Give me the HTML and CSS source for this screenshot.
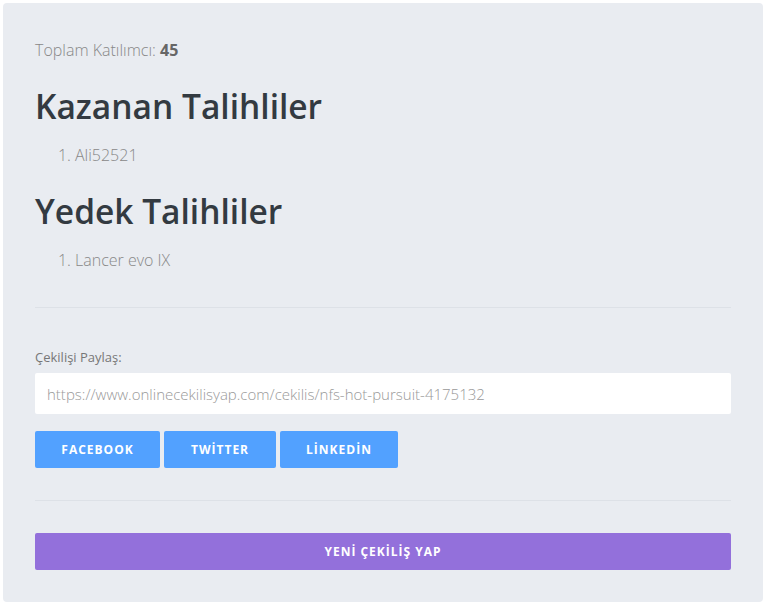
FILE: index.html
```html
<!DOCTYPE html>
<html lang="tr">
  <head>
    <title>Çekiliş Sonucu</title>
    <meta charset="utf-8" />
    <link rel="stylesheet" href="styles.css">
  </head>
  <body>
    <div class="card">
      <p class="total">Toplam Katılımcı: <b>45</b></p>

      <h2>Kazanan Talihliler</h2>
      <ol class="names">
        <li>Ali52521</li>
      </ol>

      <h2>Yedek Talihliler</h2>
      <ol class="names">
        <li>Lancer evo IX</li>
      </ol>

      <hr class="first" />

      <div class="share">
        <label for="shareLink">Çekilişi Paylaş:</label>
        <input
          id="shareLink"
          type="text"
          readonly
          value="https://www.onlinecekilisyap.com/cekilis/nfs-hot-pursuit-4175132"
        />
        <div class="buttons">
          <a class="btn btn-blue btn-fb" href="#">Facebook</a>
          <a class="btn btn-blue btn-tw" href="#">Twİtter</a>
          <a class="btn btn-blue btn-in" href="#">Lİnkedİn</a>
        </div>
      </div>

      <hr />

      <a class="btn btn-purple" href="#">Yenİ Çekİlİş Yap</a>
    </div>
  </body>
</html>
```

FILE: styles.css
```css
body {
  margin: 0;
  padding: 3px 6px 6px 3px;
  background-color: #fff;
  font-family: "Open Sans", sans-serif;
  font-weight: 300;
  color: #888;
}

.card {
  background-color: #e9ecf1;
  border-radius: 4px;
  padding: 35px 32px 32px;
}

.total {
  margin: 0;
  font-size: 16px;
  line-height: 24px;
}

.total b {
  font-weight: 700;
  color: #666;
}

h2 {
  font-family: "Open Sans", sans-serif;
  font-weight: 600;
  font-size: 33.5px;
  line-height: 40px;
  color: #333a41;
  margin: 24px 0 17px;
}

.names {
  margin: 0;
  padding-left: 40px;
  font-size: 16px;
  line-height: 24px;
}

hr {
  border: 0;
  border-top: 1px solid #dde1e7;
  margin: 32px 0;
}

hr.first {
  margin: 35px 0 39px;
}

.share label {
  display: block;
  font-size: 13px;
  font-weight: 400;
  color: #777;
  line-height: 20px;
  margin-bottom: 6px;
}

.share input {
  display: block;
  box-sizing: border-box;
  width: 100%;
  height: 41px;
  border: 0;
  border-radius: 2px;
  padding: 0 12px;
  background: #fff;
  font-family: "Open Sans", sans-serif;
  font-weight: 300;
  font-size: 15px;
  color: #999;
  outline: none;
}

.buttons {
  display: flex;
  gap: 4px;
  margin-top: 17px;
}

.btn {
  display: inline-block;
  box-sizing: border-box;
  height: 37px;
  line-height: 37px;
  border-radius: 2px;
  text-align: center;
  text-decoration: none;
  text-transform: uppercase;
  color: #fff;
  font-size: 12px;
  font-weight: 700;
  letter-spacing: 1px;
}

.btn-blue {
  background-color: #52a1ff;
}

.btn-fb {
  width: 125px;
}

.btn-tw {
  width: 112px;
}

.btn-in {
  width: 118px;
}

.btn-purple {
  display: block;
  background-color: #9370db;
}
```
